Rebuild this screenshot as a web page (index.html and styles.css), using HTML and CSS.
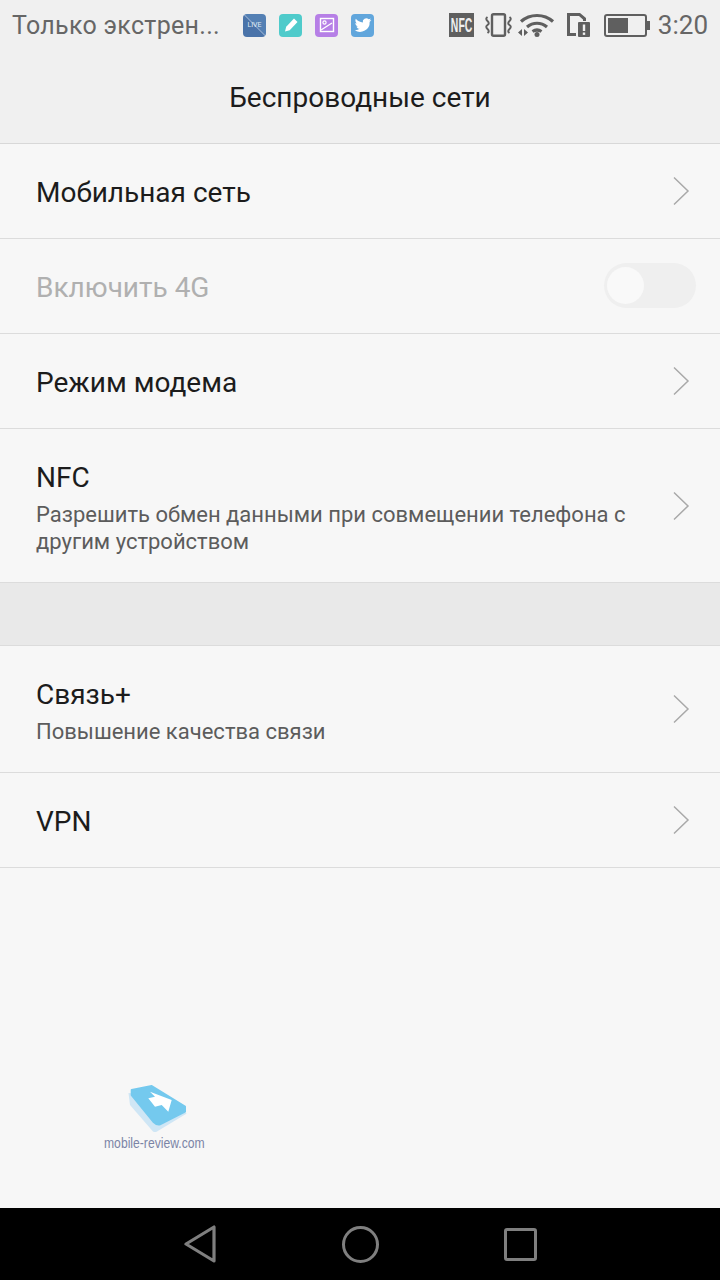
FILE: index.html
```html
<!DOCTYPE html>
<html lang="ru">
<head>
<meta charset="utf-8">
<title>Беспроводные сети</title>
<link rel="stylesheet" href="styles.css">
</head>
<body>
<div class="screen">
  <header class="top">
    <div class="status">
      <span class="carrier">Только экстрен...</span>
      <div class="notifs">
        <span class="app app-blue"><span class="app-label">LIVE</span></span>
        <span class="app app-teal">
          <svg viewBox="0 0 22 22" width="22" height="22"><path d="M5 17.500l1.200-4.800 7.800-8.200 3.500 3.500-7.800 8.200z" fill="#fff"/></svg>
        </span>
        <span class="app app-purple">
          <svg viewBox="0 0 22 22" width="22" height="22"><rect x="4.500" y="4.500" width="13" height="13" fill="none" stroke="#fff" stroke-width="1.400"/><circle cx="8.500" cy="8.500" r="1.600" fill="none" stroke="#fff" stroke-width="1.200"/><path d="M5 16l11-7" stroke="#fff" stroke-width="1.400" fill="none"/></svg>
        </span>
        <span class="app app-sky">
          <svg viewBox="0 0 24 24" width="20" height="20"><path fill="#fff" d="M22 5.900c-.7.3-1.500.5-2.400.6.9-.5 1.500-1.300 1.800-2.300-.8.5-1.700.8-2.600 1a4.100 4.100 0 0 0-7 3.700C8.400 8.700 5.400 7.100 3.400 4.600c-1.100 1.900-.5 4.300 1.300 5.500-.7 0-1.300-.2-1.900-.5 0 2 1.400 3.700 3.300 4.100-.6.2-1.200.2-1.900.1.500 1.600 2 2.800 3.800 2.800A8.300 8.300 0 0 1 2 18.300 11.600 11.600 0 0 0 20 8c.8-.6 1.500-1.300 2-2.100z"/></svg>
        </span>
      </div>
      <div class="sys">
        <span class="nfc"><span class="nfc-text">NFC</span></span>
        <svg class="ico ico-vib" viewBox="0 0 27 24" width="27" height="24" fill="none" stroke="#5f5f5f">
          <rect x="7" y="1.200" width="13" height="21.600" rx="1.500" stroke-width="2.400"/>
          <path stroke-width="2" d="M2.500 4q-2.500 1.700 0 4t0 4 0 4 0 4M24.500 4q2.500 1.700 0 4t0 4 0 4 0 4"/>
        </svg>
        <svg class="ico ico-wifi" viewBox="0 0 37 24" width="37" height="24" fill="none" stroke="#5f5f5f" stroke-width="3.200">
          <path d="M3 8.500C12 .5 26 .5 35 8.500"/>
          <path d="M9 14c6-5 14-5 20 0"/>
          <path d="M14.500 18.500c3-2 6-2 9 0"/>
          <circle cx="19" cy="21.500" r="2.500" fill="#5f5f5f" stroke="none"/>
          <path d="M0 19.500l4-3.500v7zM10 19.500l-4-3.500v7z" fill="#5f5f5f" stroke="none"/>
        </svg>
        <svg class="ico ico-sim" viewBox="0 0 23 24" width="23" height="24">
          <path d="M0 0h13l6 5v3h-3V6.500L12 3H3v17h6v3H0z" fill="#5f5f5f"/>
          <rect x="11" y="9" width="12" height="15" rx="1" fill="#5f5f5f"/>
          <rect x="15.800" y="11.500" width="2.400" height="6.500" fill="#f0f0f0"/>
          <rect x="15.800" y="19.500" width="2.400" height="2.400" fill="#f0f0f0"/>
        </svg>
        <span class="battery"><span class="battery-fill"></span></span>
        <span class="time">3:20</span>
      </div>
    </div>
    <h1 class="title">Беспроводные сети</h1>
  </header>

  <main class="list">
    <section class="group">
      <div class="row">
        <div class="text"><div class="name">Мобильная сеть</div></div>
        <svg class="chev" viewBox="0 0 18 30" width="18" height="30"><path d="M2 1.500L16 15 2 28.500"/></svg>
      </div>
      <div class="row row-off">
        <div class="text"><div class="name">Включить 4G</div></div>
        <span class="switch"><span class="knob"></span></span>
      </div>
      <div class="row">
        <div class="text"><div class="name">Режим модема</div></div>
        <svg class="chev" viewBox="0 0 18 30" width="18" height="30"><path d="M2 1.500L16 15 2 28.500"/></svg>
      </div>
      <div class="row row-tall">
        <div class="text">
          <div class="name">NFC</div>
          <div class="sub">Разрешить обмен данными при совмещении телефона с другим устройством</div>
        </div>
        <svg class="chev" viewBox="0 0 18 30" width="18" height="30"><path d="M2 1.500L16 15 2 28.500"/></svg>
      </div>
    </section>
    <div class="gap"></div>
    <section class="group">
      <div class="row row-mid">
        <div class="text">
          <div class="name">Связь+</div>
          <div class="sub">Повышение качества связи</div>
        </div>
        <svg class="chev" viewBox="0 0 18 30" width="18" height="30"><path d="M2 1.500L16 15 2 28.500"/></svg>
      </div>
      <div class="row">
        <div class="text"><div class="name">VPN</div></div>
        <svg class="chev" viewBox="0 0 18 30" width="18" height="30"><path d="M2 1.500L16 15 2 28.500"/></svg>
      </div>
    </section>
    <div class="mark">
      <svg class="mark-logo" viewBox="0 0 62 50" width="62" height="50">
        <path d="M0.500 8L2 20 25 46.500q2 1 4 0L58.700 28.500 30 10z" fill="#cfe6f5"/>
        <path d="M3.700 5L23.700 1 57 21.700v5L32 39.300q-3 1-6.700-2.600L3.700 10z" fill="#74c9ee" stroke="#74c9ee" stroke-width="2" stroke-linejoin="round"/>
        <path d="M22 6.700L43.700 15 40.300 26.700 33.700 20 27 21.700 20.300 13.300 27 11.700z" fill="#fff"/>
      </svg>
      <span class="mark-text">mobile-review.com</span>
    </div>
  </main>

  <nav class="nav">
    <svg viewBox="0 0 34 38" width="34" height="38" fill="none" stroke="#7f7f7f" stroke-width="3.200" stroke-linejoin="round"><path d="M4 19L32 2v34z"/></svg>
    <svg class="nav-home" viewBox="0 0 37 37" width="37" height="37" fill="none" stroke="#7f7f7f" stroke-width="3"><circle cx="18.500" cy="18.500" r="17"/></svg>
    <svg viewBox="0 0 33 33" width="33" height="33" fill="none" stroke="#7f7f7f" stroke-width="3" stroke-linejoin="round"><rect x="1.500" y="1.500" width="30" height="30" rx="1.500"/></svg>
  </nav>
</div>
</body>
</html>
```
FILE: styles.css
```css
* { box-sizing: border-box; }
html, body { margin: 0; padding: 0; }
body { font-family: Roboto, "Noto Sans", sans-serif; background: #f7f7f7; }
.screen { width: 720px; height: 1280px; display: flex; flex-direction: column; overflow: hidden; }

.top { height: 144px; background: #f0f0f0; border-bottom: 1px solid #d8d8d8; flex: none; }
.status { height: 50px; display: flex; align-items: center; padding: 0 12px; }
.carrier { font-size: 25px; color: #666; width: 231px; white-space: nowrap; letter-spacing: .3px; }
.notifs { display: flex; gap: 13px; }
.app { width: 23px; height: 23px; border-radius: 4px; display: flex; align-items: center; justify-content: center; }
.app-blue { background: linear-gradient(45deg, #4a73a9 49%, #7d9cc4 50%, #7d9cc4 53%, #5480b4 54%); }
.app-teal { background: #4fcbcb; }
.app-purple { background: #b67fe6; }
.app-sky { background: #61a6dc; }
.app-label { font-size: 7px; color: #dfe8f2; }
.sys { margin-left: auto; display: flex; align-items: center; }
.nfc { background: #5f5f5f; color: #f0f0f0; width: 25px; height: 24px; display: flex; align-items: center; justify-content: center; overflow: hidden; margin-right: 11px; }
.nfc-text { display: block; font-family: "Liberation Sans", sans-serif; font-weight: 700; font-size: 20px; line-height: 24px; transform: scaleX(.52); }
.ico { display: block; flex: none; }
.ico-vib { margin-right: 6px; }
.ico-wifi { margin-right: 12px; }
.ico-sim { margin-right: 14px; }
.battery { width: 43px; height: 23px; margin-right: 11px; border: 2px solid #5f5f5f; border-radius: 3px; padding: 2px; display: block; position: relative; }
.battery::after { content: ""; position: absolute; right: -5px; top: 5px; width: 3px; height: 9px; background: #5f5f5f; }
.battery-fill { display: block; width: 20px; height: 15px; background: #5f5f5f; }
.time { font-size: 26px; color: #666; }
.title { margin: 0; height: 93px; display: flex; align-items: center; justify-content: center; font-size: 28px; font-weight: 400; color: #1c1c1c; padding-top: 1px; }

.list { flex: 1; position: relative; }
.row { height: 95px; padding: 0 30px 0 36px; display: flex; align-items: center; border-bottom: 1px solid #dcdcdc; }
.row-tall { height: 154px; }
.row-mid { height: 127px; }
.row-off { padding-right: 24px; }
.text { flex: 1; min-width: 0; padding-right: 36px; }
.name { font-size: 28px; color: #1c1c1c; line-height: 34px; padding-top: 4px; }
.row-off .name { color: #b0b0b0; }
.sub { font-size: 22px; color: #5c5c5c; line-height: 27px; margin-top: 6px; }
.chev { flex: none; fill: none; stroke: #a9a9a9; stroke-width: 1.500; }
.switch { width: 92px; height: 45px; margin-bottom: 1px; border-radius: 23px; background: #efefef; padding: 4px 3px; display: block; }
.knob { display: block; width: 37px; height: 37px; border-radius: 50%; background: #f9f9f9; }
.gap { height: 63px; background: #e9e9e9; border-bottom: 1px solid #dcdcdc; }
.mark { position: absolute; left: 104px; top: 941px; display: flex; flex-direction: column; align-items: flex-start; }
.mark-logo { margin-left: 24px; }
.mark-text { font-family: "Liberation Sans", sans-serif; font-size: 15px; line-height: 18px; color: #7b84a6; white-space: nowrap; margin-top: -1px; transform: scaleX(.81); transform-origin: left center; }
.nav { height: 72px; flex: none; background: #000; display: flex; align-items: center; justify-content: center; gap: 126px; padding-right: 1px; }
.nav-home { margin-right: -1px; }
```
